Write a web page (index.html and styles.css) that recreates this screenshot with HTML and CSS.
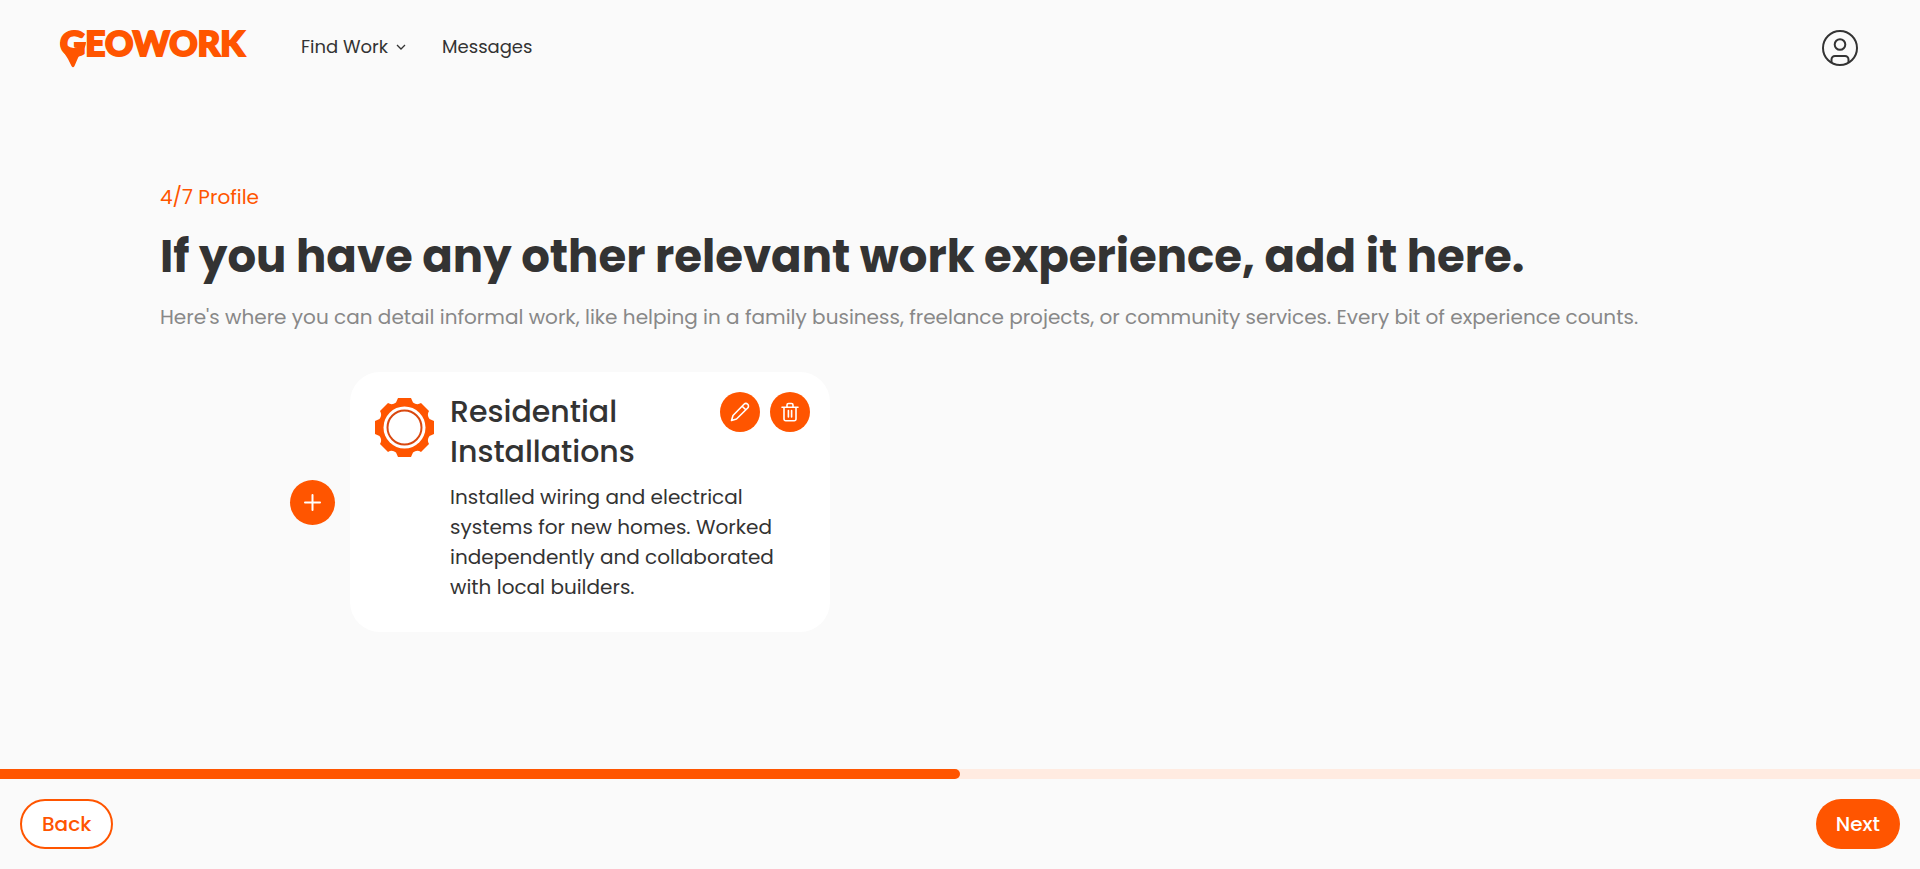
FILE: index.html
```html
<!DOCTYPE html>
<html lang="en">
<head>
<meta charset="utf-8">
<meta name="viewport" content="width=device-width, initial-scale=1">
<title>Geowork – Profile</title>
<link rel="stylesheet" href="styles.css">
</head>
<body>
<header class="header">
  <a class="logo" href="#">
    <span class="logo-text">GEOWORK</span>
    <svg class="logo-pin" viewBox="0 0 26 26" aria-hidden="true"><path d="M0 0C0 8 5 11 8 17L11.500 24Q13 26.500 14.500 24L17.500 17C20 11 26 7 26 0H19V4Q13 8 7 3.500L6 0Z"/></svg>
  </a>
  <nav class="nav">
    <button class="nav-item" type="button">Find Work
      <svg class="chevron" viewBox="0 0 10 6" aria-hidden="true"><path d="M1 1l4 4 4-4"/></svg>
    </button>
    <a class="nav-item" href="#">Messages</a>
  </nav>
  <button class="account" type="button" aria-label="Account">
    <svg viewBox="0 0 36 36" aria-hidden="true"><circle cx="18" cy="18" r="17"/><circle cx="18" cy="14.500" r="5.300"/><path d="M9.500 32.500V29.500a3.500 3.500 0 0 1 3.500-3.500h10a3.500 3.500 0 0 1 3.500 3.500v3"/></svg>
  </button>
</header>

<main class="main">
  <p class="step">4/7 Profile</p>
  <h1 class="title">If you have any other relevant work experience, add it here.</h1>
  <p class="subtitle">Here's where you can detail informal work, like helping in a family business, freelance projects, or community services. Every bit of experience counts.</p>
  <section class="experiences">
    <button class="round round-add" type="button" aria-label="Add experience">
      <svg class="plus" viewBox="0 0 17 17" aria-hidden="true"><path d="M8.500 1v15M1 8.500h15"/></svg>
    </button>
    <article class="card">
      <svg class="gear" viewBox="0 0 59 59" aria-hidden="true">
        <path class="gear-body" d="M23 0H36L38 4.500Q42 7.500 46 5L54 13Q51.500 17 54.500 21L59 23V36L54.500 38Q51.500 42 54 46L46 54Q42 51.500 38 54.500L36 59H23L21 54.500Q17 51.500 13 54L5 46Q7.500 42 4.500 38L0 36V23L4.500 21Q7.500 17 5 13L13 5Q17 7.500 21 4.500Z"/>
        <circle class="gear-hole" cx="29.500" cy="29.500" r="21"/>
        <circle class="gear-ring" cx="29.500" cy="29.500" r="17"/>
      </svg>
      <div class="card-body">
        <div class="card-head">
          <h2 class="card-title">Residential Installations</h2>
          <div class="actions">
            <button class="round" type="button" aria-label="Edit">
              <svg class="icon" viewBox="0 0 20 20" aria-hidden="true"><path d="M1.500 18.500L3 13.500L14 2.300a2.550 2.550 0 0 1 3.700 3.700L6.500 17ZM12.200 4.200l3.600 3.600"/></svg>
            </button>
            <button class="round" type="button" aria-label="Delete">
              <svg class="icon" viewBox="0 0 20 20" aria-hidden="true"><path d="M2 5.200h16M4 5.200V17a1.700 1.700 0 0 0 1.700 1.700h8.600A1.700 1.700 0 0 0 16 17V5.200M7 5V3a1.500 1.500 0 0 1 1.500-1.500h3A1.500 1.500 0 0 1 13 3v2M8.400 8.500v6.500M11.600 8.500v6.500"/></svg>
            </button>
          </div>
        </div>
        <p class="card-text">Installed wiring and electrical systems for new homes. Worked independently and collaborated with local builders.</p>
      </div>
    </article>
  </section>
</main>

<footer class="footer">
  <div class="progress" role="progressbar" aria-label="Profile progress" aria-valuenow="50" aria-valuemin="0" aria-valuemax="100"><div class="progress-fill" style="width:50%"></div></div>
  <div class="footer-actions">
    <button class="button button-outline" type="button">Back</button>
    <button class="button" type="button">Next</button>
  </div>
</footer>
</body>
</html>
```
FILE: styles.css
```css
:root {
  --orange: #ff5500;
  --ink: #333;
}
* { box-sizing: border-box; }
body {
  margin: 0;
  min-height: 100vh;
  display: flex;
  flex-direction: column;
  background: #fafafa;
  color: var(--ink);
  font-family: Poppins, Inter, "Open Sans", sans-serif;
}
button {
  font: inherit;
  color: inherit;
  border: 0;
  padding: 0;
  background: none;
  cursor: pointer;
}
a { color: inherit; text-decoration: none; }
svg { display: block; }
h1, h2, p { margin: 0; }

.header {
  display: flex;
  align-items: center;
  padding: 24px 62px 24px 60px;
}
.logo {
  position: relative;
  min-width: 185px;
  margin-right: 56px;
  padding-bottom: 12px;
  color: var(--orange);
}
.logo-text {
  display: block;
  font-family: Lato, sans-serif;
  font-size: 35px;
  font-weight: 900;
  line-height: 36px;
  -webkit-text-stroke: 2px var(--orange);
}
.logo-pin {
  position: absolute;
  left: 0;
  top: 18px;
  width: 26px;
  height: 26px;
  fill: var(--orange);
}
.nav { display: flex; gap: 36px; flex: 1; padding-bottom: 2px; }
.nav-item {
  display: flex;
  align-items: center;
  gap: 8px;
  font-size: 18px;
  line-height: 24px;
}
.chevron { width: 10px; height: 6px; fill: none; stroke: currentColor; stroke-width: 1.3; }
.account svg { width: 36px; height: 36px; fill: none; stroke: var(--ink); stroke-width: 2; }

.main { flex: 1; padding: 86px 160px 40px; }
.step { color: var(--orange); font-size: 20px; line-height: 30px; }
.title { margin: 9px 0; font-size: 45px; font-weight: 700; line-height: 72px; }
.subtitle { color: #888; font-size: 20px; line-height: 30px; }

.experiences {
  display: flex;
  align-items: center;
  gap: 15px;
  margin-top: 40px;
  padding-left: 130px;
}
.round {
  display: grid;
  place-items: center;
  flex: none;
  width: 40px;
  height: 40px;
  border-radius: 50%;
  background: var(--orange);
}
.round-add { width: 45px; height: 45px; }
.plus { width: 17px; height: 17px; stroke: #fff; stroke-width: 2; stroke-linecap: round; }
.icon { width: 20px; height: 20px; fill: none; stroke: #fff; stroke-width: 1.6; stroke-linecap: round; stroke-linejoin: round; }
.card {
  display: flex;
  gap: 16px;
  width: 480px;
  padding: 20px 20px 30px 25px;
  border-radius: 30px;
  background: #fff;
}
.gear { flex: none; width: 59px; height: 59px; margin-top: 6px; }
.gear-body { fill: var(--orange); }
.gear-hole { fill: #fff; }
.gear-ring { fill: #fff; stroke: #d9480f; stroke-width: 2; }
.card-body { flex: 1; }
.card-head { display: flex; justify-content: space-between; align-items: flex-start; }
.card-title { width: min-content; font-size: 30px; font-weight: 500; line-height: 40px; }
.actions { display: flex; gap: 10px; }
.card-text { margin: 10px 20px 0 0; font-size: 20px; line-height: 30px; }

.progress { height: 10px; background: #ffebe1; }
.progress-fill { height: 100%; background: var(--orange); border-radius: 0 5px 5px 0; }
.footer-actions { display: flex; justify-content: space-between; padding: 20px; }
.button {
  padding: 0 20px;
  border-radius: 25px;
  background: var(--orange);
  color: #fff;
  font-size: 20px;
  font-weight: 500;
  line-height: 50px;
}
.button-outline {
  border: 2px solid var(--orange);
  background: #fff;
  color: var(--orange);
  line-height: 46px;
}
```
